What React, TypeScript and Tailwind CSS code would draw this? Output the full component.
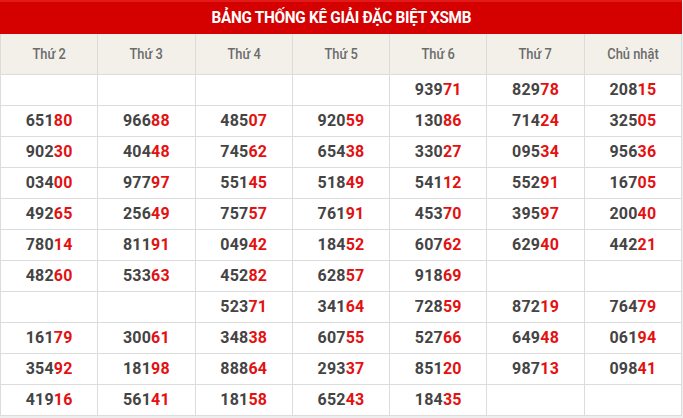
const days = ['Thứ 2', 'Thứ 3', 'Thứ 4', 'Thứ 5', 'Thứ 6', 'Thứ 7', 'Chủ nhật'];

const rows: string[][] = [
  ['', '', '', '', '93971', '82978', '20815'],
  ['65180', '96688', '48507', '92059', '13086', '71424', '32505'],
  ['90230', '40448', '74562', '65438', '33027', '09534', '95636'],
  ['03400', '97797', '55145', '51849', '54112', '55291', '16705'],
  ['49265', '25649', '75757', '76191', '45370', '39597', '20040'],
  ['78014', '81191', '04942', '18452', '60762', '62940', '44221'],
  ['48260', '53363', '45282', '62857', '91869', '', ''],
  ['', '', '52371', '34164', '72859', '87219', '76479'],
  ['16179', '30061', '34838', '60755', '52766', '64948', '06194'],
  ['35492', '18198', '88864', '29337', '85120', '98713', '09841'],
  ['41916', '56141', '18158', '65243', '18435', '', ''],
];

const Cell = ({ value }: { value: string }) => (
  <div className="h-[31px] flex items-center justify-center border-r border-b border-[#dcdcdc] text-[16px] font-bold tracking-[0.2px]">
    {value && (
      <>
        <span className="text-[#444]">{value.slice(0, 3)}</span>
        <span className="text-[#e41111]">{value.slice(3)}</span>
      </>
    )}
  </div>
);

const App = () => {
  return (
    <div className="w-[683px] h-[418px] bg-[#eeeeee] overflow-hidden" style={{ fontFamily: 'Roboto, "Liberation Sans", sans-serif' }}>
      <div className="w-[682px] bg-white">
        <div className="h-[34px] bg-[#d50000] border-t-2 border-[#e31a1a] flex items-center justify-center">
          <h1 className="text-white font-bold text-[17px] tracking-[-0.3px] scale-x-[0.9]">BẢNG THỐNG KÊ GIẢI ĐẶC BIỆT XSMB</h1>
        </div>
        <div className="grid grid-cols-7 border-l border-[#dcdcdc]">
          {days.map((day) => (
            <div key={day} className="h-[41px] flex items-center justify-center bg-[#f3f0ea] border-r border-b border-[#dcdcdc] text-[14px] font-medium text-[#6b6b6b]">
              <span className="scale-x-[0.92]">{day}</span>
            </div>
          ))}
          {rows.map((row, i) => row.map((value, j) => <Cell key={`${i}-${j}`} value={value} />))}
        </div>
      </div>
    </div>
  );
};

export default App;
